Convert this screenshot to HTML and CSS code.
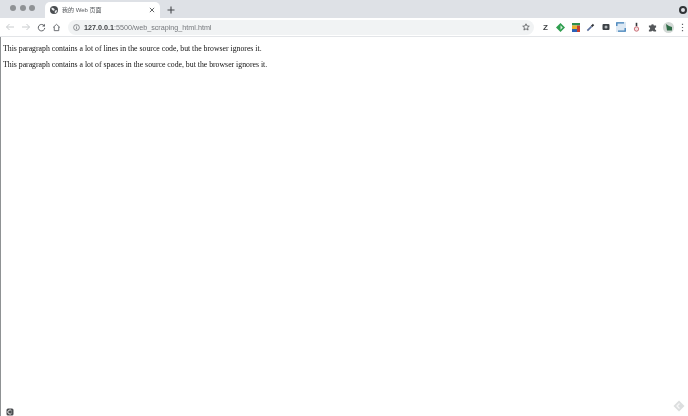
FILE: index.html
```html
<!DOCTYPE html>
<html lang="en">
<head>
    <meta charset="UTF-8">
    <title>我的 Web 页面</title>
    <link rel="stylesheet" href="styles.css">
</head>
<body>
    <div class="window">
        <!-- Tab strip -->
        <div class="tabstrip">
            <div class="lights">
                <span class="light"></span>
                <span class="light"></span>
                <span class="light"></span>
            </div>
            <div class="tab">
                <svg class="favicon" width="8" height="8" viewBox="0 0 10 10">
                    <circle cx="5" cy="5" r="5" fill="#4a4d50"/>
                    <path d="M2 2l3 1 1 2-2 1-2-2zM6 6l3-1-1 3-2 1z" fill="#eef0f2"/>
                </svg>
                <span class="tab-title">我的 Web 页面</span>
                <svg class="tab-close" width="6" height="6" viewBox="0 0 7 7">
                    <path d="M1 1l5 5M6 1l-5 5" stroke="#5a5d60" stroke-width="1.100"/>
                </svg>
            </div>
            <svg class="new-tab" width="8" height="8" viewBox="0 0 8 8">
                <path d="M4 .5v7M.5 4h7" stroke="#45484b" stroke-width="1.100"/>
            </svg>
            <svg class="window-menu" width="8" height="8" viewBox="0 0 8 8">
                <circle cx="4" cy="4" r="3" fill="none" stroke="#303336" stroke-width="2"/>
            </svg>
        </div>

        <!-- Toolbar -->
        <div class="toolbar">
            <svg class="nav" width="10" height="10" viewBox="0 0 10 10">
                <path d="M9 5H1.500M4.500 2L1.500 5l3 3" fill="none" stroke="#c9ccce" stroke-width="1"/>
            </svg>
            <svg class="nav" width="10" height="10" viewBox="0 0 10 10">
                <path d="M1 5h7.500M5.500 2l3 3-3 3" fill="none" stroke="#c9ccce" stroke-width="1"/>
            </svg>
            <svg class="nav" width="9" height="9" viewBox="0 0 10 10">
                <path d="M8 3.200A3.600 3.600 0 1 0 8.600 5.500" fill="none" stroke="#5f6266" stroke-width="1.100"/>
                <path d="M8.800 .8v3H5.800z" fill="#5f6266"/>
            </svg>
            <svg class="nav" width="9" height="9" viewBox="0 0 10 10">
                <path d="M1.200 5L5 1.500 8.800 5M2.500 4.200V8.500h5V4.200" fill="none" stroke="#5f6266" stroke-width="1"/>
            </svg>
            <div class="omnibox">
                <svg class="info" width="7" height="7" viewBox="0 0 8 8">
                    <circle cx="4" cy="4" r="3.300" fill="none" stroke="#63666a" stroke-width=".8"/>
                    <path d="M4 3.500v2.400M4 2v.9" stroke="#63666a" stroke-width=".8"/>
                </svg>
                <span class="url"><b>127.0.0.1</b>:5500/web_scraping_html.html</span>
                <svg class="star" width="8" height="8" viewBox="0 0 10 10">
                    <path d="M5 1l1.200 2.700 2.900.3-2.200 1.900.7 2.900L5 7.300 2.400 8.800l.7-2.900L.9 4l2.900-.3z" fill="none" stroke="#55585b" stroke-width="1"/>
                </svg>
            </div>
            <div class="extensions">
                <span class="ext-z">Z</span>
                <svg width="9" height="9" viewBox="0 0 10 10">
                    <path d="M5 0l5 5-5 5-5-5z" fill="#2f9e4f"/>
                    <path d="M5 2.500L7.500 5 5 7.500z" fill="#d8f0de"/>
                </svg>
                <svg width="8" height="9" viewBox="0 0 8 9">
                    <path d="M0 0h8v2.500H0z" fill="#2e8f4e"/>
                    <path d="M0 2.500h5v3.500H0z" fill="#e9b030"/>
                    <path d="M5 2.500h3V9H5z" fill="#c8402f"/>
                    <path d="M0 6h5v3H0z" fill="#2b62b8"/>
                </svg>
                <svg width="9" height="9" viewBox="0 0 10 10">
                    <path d="M1.500 8.500L6 4" stroke="#5c6f9c" stroke-width="1.800"/>
                    <path d="M6 2.500l1.500 1.500M7 1.500L8.500 3" stroke="#2f3338" stroke-width="1.800"/>
                </svg>
                <svg width="8" height="8" viewBox="0 0 8 8">
                    <rect x=".5" y="1" width="7" height="6" rx="1" fill="#3d4246"/>
                    <circle cx="4" cy="4" r="1.500" fill="#b5b9bc"/>
                </svg>
                <svg width="10" height="10" viewBox="0 0 10 10">
                    <rect width="10" height="10" fill="#dce8f3"/>
                    <path d="M.8 4V.8H8M9.200 6v3.200H2" fill="none" stroke="#3e7fb8" stroke-width="1.300"/>
                </svg>
                <svg width="9" height="10" viewBox="0 0 9 10">
                    <path d="M4.500 .8v3.500" stroke="#33363a" stroke-width="1.600"/>
                    <circle cx="4.500" cy="7" r="2.200" fill="#f3dfe1" stroke="#c25560" stroke-width=".8"/>
                </svg>
                <svg width="9" height="9" viewBox="0 0 10 10">
                    <path d="M1 2.800h2.500a1.500 1.500 0 0 1 3 0H9v2.200a1.400 1.400 0 0 0 0 2.800v1.700H6.200a1.300 1.300 0 0 0-2.400 0H1V7.500a1.400 1.400 0 0 0 0-2.800z" fill="#55585b"/>
                </svg>
                <span class="avatar">
                    <svg width="8" height="8" viewBox="0 0 8 8">
                        <path d="M1 1l3 2 3 1v3.500H2z" fill="#2e6b46"/>
                    </svg>
                </span>
                <svg width="3" height="9" viewBox="0 0 3 9">
                    <path d="M1.500 .8v1.200M1.500 3.900v1.200M1.500 7v1.200" stroke="#5f6266" stroke-width="1.200"/>
                </svg>
            </div>
        </div>

        <!-- Page content -->
        <div class="page">
            <p>This paragraph contains a lot of lines in the source code, but the browser ignores it.</p>
            <p>This paragraph contains a lot of spaces in the source code, but the browser ignores it.</p>
            <svg class="corner-left" width="8" height="8" viewBox="0 0 8 8">
                <rect x=".5" y=".5" width="7" height="7" rx="1.500" fill="#4c4f52"/>
                <path d="M5.600 3A2 2 0 1 0 5.600 5" fill="none" stroke="#e8e8e8" stroke-width="1"/>
            </svg>
            <svg class="corner-right" width="12" height="12" viewBox="0 0 12 12">
                <path d="M6 .5L11.500 6 6 11.500.5 6z" fill="#dcdedf"/>
                <path d="M6.500 3.500L4 6l2.500 2.500" fill="none" stroke="#f7f7f7" stroke-width="1.300"/>
            </svg>
        </div>
    </div>
</body>
</html>
```

FILE: styles.css
```css
html, body {
    margin: 0;
    height: 100%;
    overflow: hidden;
}

body {
    font-family: 'Liberation Sans', Arial, sans-serif;
    background-color: #ffffff;
}

.window {
    display: flex;
    flex-direction: column;
    height: 100vh;
}

.tabstrip {
    display: flex;
    align-items: flex-end;
    height: 18px;
    flex: none;
    background-color: #dee1e6;
}

.lights {
    display: flex;
    align-self: center;
    gap: 3.500px;
    margin: 0 0 2px 10px;
    width: 35px;
}

.light {
    width: 6px;
    height: 6px;
    border-radius: 50%;
    background-color: #8f9295;
}

.tab {
    display: flex;
    align-items: center;
    width: 115px;
    height: 16px;
    box-sizing: border-box;
    padding: 0 5px 0 6px;
    background-color: #ffffff;
    border-radius: 5px 5px 0 0;
}

.favicon {
    flex: none;
    margin-right: 3px;
    margin-left: -1px;
}

.tab-title {
    flex: 1;
    margin-left: 1px;
    font-family: 'Liberation Sans', 'Noto Sans CJK SC', sans-serif;
    font-size: 6px;
    line-height: 8px;
    color: #55585c;
    white-space: nowrap;
    will-change: opacity;
}

.new-tab {
    align-self: center;
    margin: 2px 0 0 7px;
}

.window-menu {
    align-self: center;
    margin: 2px 1px 0 auto;
}

.toolbar {
    display: flex;
    align-items: center;
    height: 19px;
    flex: none;
    padding-left: 5px;
    box-sizing: border-box;
    background-color: #ffffff;
    border-bottom: 1px solid #e3e5e8;
}

.nav {
    flex: none;
    margin-right: 6px;
}

.omnibox {
    display: flex;
    align-items: center;
    width: 466px;
    height: 15px;
    margin-left: 1px;
    padding: 0 4px 0 5px;
    box-sizing: border-box;
    background-color: #f1f3f4;
    border-radius: 8px;
}

.info {
    flex: none;
    margin-right: 4px;
}

.url {
    flex: 1;
    font-size: 7.200px;
    color: #75787c;
    white-space: nowrap;
    will-change: opacity;
}

.url b {
    font-weight: bold;
    color: #3c3f42;
}

.extensions {
    display: flex;
    align-items: center;
    gap: 6.400px;
    margin-left: 7px;
}

.ext-z {
    width: 9px;
    font-size: 8px;
    font-weight: bold;
    text-align: center;
    color: #3f4245;
    will-change: opacity;
}

.avatar {
    display: flex;
    align-items: center;
    justify-content: center;
    width: 11px;
    height: 11px;
    border-radius: 50%;
    background-color: #d3d9d6;
}

.page {
    position: relative;
    flex: 1;
    padding: 7px 2px 0;
    border-left: 1px solid #8f9294;
    font-family: 'Liberation Serif', 'Times New Roman', serif;
    font-size: 7.770px;
    color: #111111;
}

.page p {
    margin: 0 0 7px;
    line-height: 9px;
    will-change: opacity;
}

.corner-left {
    position: absolute;
    left: 5px;
    bottom: 0;
}

.corner-right {
    position: absolute;
    right: 3px;
    bottom: 4px;
}
```
